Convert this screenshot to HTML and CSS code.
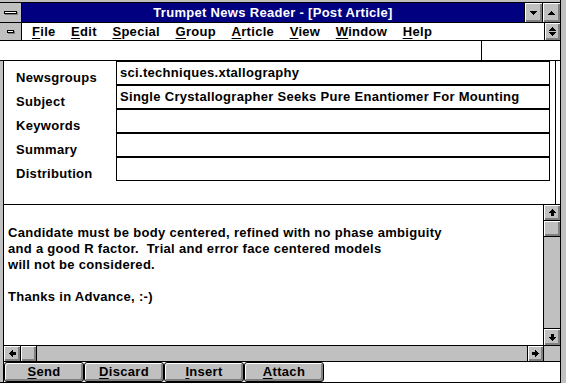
FILE: index.html
```html
<!DOCTYPE html>
<html>
<head>
<meta charset="utf-8">
<title>Trumpet News Reader - [Post Article]</title>
<link rel="stylesheet" href="styles.css">
</head>
<body>
<div class="window">
  <div class="main">
    <div class="titlebar">
      <div class="sysbox"><span class="sysdash"></span></div>
      <div class="title">Trumpet News Reader - [Post Article]</div>
      <div class="tbtn">
        <svg width="7" height="4" viewBox="0 0 7 4" shape-rendering="crispEdges"><rect x="0" y="0" width="7" height="1"/><rect x="1" y="1" width="5" height="1"/><rect x="2" y="2" width="3" height="1"/><rect x="3" y="3" width="1" height="1"/></svg>
      </div>
      <div class="tbtn">
        <svg width="7" height="4" viewBox="0 0 7 4" shape-rendering="crispEdges"><rect x="3" y="0" width="1" height="1"/><rect x="2" y="1" width="3" height="1"/><rect x="1" y="2" width="5" height="1"/><rect x="0" y="3" width="7" height="1"/></svg>
      </div>
    </div>
    <div class="menubar">
      <div class="docsys"><span class="docdash"></span></div>
      <nav class="menu">
        <span class="mi"><u>F</u>ile</span>
        <span class="mi"><u>E</u>dit</span>
        <span class="mi"><u>S</u>pecial</span>
        <span class="mi"><u>G</u>roup</span>
        <span class="mi"><u>A</u>rticle</span>
        <span class="mi"><u>V</u>iew</span>
        <span class="mi"><u>W</u>indow</span>
        <span class="mi"><u>H</u>elp</span>
      </nav>
      <div class="restore">
        <svg width="7" height="9" viewBox="0 0 7 9" shape-rendering="crispEdges"><rect x="3" y="0" width="1" height="1"/><rect x="2" y="1" width="3" height="1"/><rect x="1" y="2" width="5" height="1"/><rect x="0" y="3" width="7" height="1"/><rect x="0" y="5" width="7" height="1"/><rect x="1" y="6" width="5" height="1"/><rect x="2" y="7" width="3" height="1"/><rect x="3" y="8" width="1" height="1"/></svg>
      </div>
    </div>
    <div class="toolbar">
      <div class="tool-left"></div>
      <div class="tool-right"></div>
    </div>
    <div class="child">
      <div class="child-frame"></div>
      <div class="child-body">
        <div class="form">
          <div class="labels">
            <div>Newsgroups</div>
            <div>Subject</div>
            <div>Keywords</div>
            <div>Summary</div>
            <div>Distribution</div>
          </div>
          <div class="fields">
            <div class="field">sci.techniques.xtallography</div>
            <div class="field">Single Crystallographer Seeks Pure Enantiomer For Mounting</div>
            <div class="field"></div>
            <div class="field"></div>
            <div class="field"></div>
          </div>
          <div class="vline"></div>
        </div>
        <div class="editor">
          <div class="edit-text">
            <div class="ln"></div>
            <div class="ln">Candidate must be body centered, refined with no phase ambiguity</div>
            <div class="ln">and a good R factor.  Trial and error face centered models</div>
            <div class="ln">will not be considered.</div>
            <div class="ln"></div>
            <div class="ln">Thanks in Advance, :-)</div>
          </div>
          <div class="vscroll">
            <div class="sbtn up">
              <svg width="7" height="7" viewBox="0 0 7 7" shape-rendering="crispEdges"><rect x="3" y="0" width="1" height="1"/><rect x="2" y="1" width="3" height="1"/><rect x="1" y="2" width="5" height="1"/><rect x="0" y="3" width="7" height="1"/><rect x="2" y="4" width="3" height="3"/></svg>
            </div>
            <div class="sthumb vthumb"></div>
            <div class="strack"></div>
            <div class="sbtn down">
              <svg width="7" height="7" viewBox="0 0 7 7" shape-rendering="crispEdges"><rect x="2" y="0" width="3" height="3"/><rect x="0" y="3" width="7" height="1"/><rect x="1" y="4" width="5" height="1"/><rect x="2" y="5" width="3" height="1"/><rect x="3" y="6" width="1" height="1"/></svg>
            </div>
          </div>
        </div>
        <div class="hscroll">
          <div class="sbtn left">
            <svg width="7" height="7" viewBox="0 0 7 7" shape-rendering="crispEdges"><rect x="0" y="3" width="1" height="1"/><rect x="1" y="2" width="1" height="3"/><rect x="2" y="1" width="1" height="5"/><rect x="3" y="0" width="1" height="7"/><rect x="4" y="2" width="3" height="3"/></svg>
          </div>
          <div class="sthumb hthumb"></div>
          <div class="htrack"></div>
          <div class="sbtn right">
            <svg width="7" height="7" viewBox="0 0 7 7" shape-rendering="crispEdges"><rect x="6" y="3" width="1" height="1"/><rect x="5" y="2" width="1" height="3"/><rect x="4" y="1" width="1" height="5"/><rect x="3" y="0" width="1" height="7"/><rect x="0" y="2" width="3" height="3"/></svg>
          </div>
          <div class="corner"></div>
        </div>
        <div class="cmdbar">
          <div class="cbtn"><u>S</u>end</div>
          <div class="cbtn"><u>D</u>iscard</div>
          <div class="cbtn"><u>I</u>nsert</div>
          <div class="cbtn"><u>A</u>ttach</div>
        </div>
      </div>
    </div>
  </div>
  <div class="rframe"></div>
</div>
</body>
</html>
```

FILE: styles.css
```css
* { box-sizing: border-box; }

body {
  margin: 0;
  background: #fff;
  font-family: "Liberation Sans", Arial, sans-serif;
  font-weight: bold;
  font-size: 13px;
  letter-spacing: 0.3px;
  color: #000;
}

u { text-decoration: underline; text-underline-offset: 2px; text-decoration-thickness: 1px; }

.window {
  display: flex;
  width: 566px;
  height: 383px;
}

.main {
  width: 560px;
  display: flex;
  flex-direction: column;
  background: #c0c0c0;
}

.rframe {
  width: 6px;
  border-left: 1px solid #000;
  background: #c0c0c0;
}

/* title bar */
.titlebar {
  display: flex;
  height: 23px;
  padding-top: 2px;
  border-bottom: 1px solid #000;
}
.titlebar > * { border-top: 1px solid #000; }
.sysbox {
  width: 22px;
  border-right: 1px solid #000;
  background: #c0c0c0;
  display: flex;
  align-items: center;
  justify-content: center;
}
.sysdash {
  width: 13px;
  height: 3px;
  background: #fff;
  border: 1px solid #000;
  box-shadow: 1px 1px 0 #808080;
}
.title {
  flex: 1;
  background: #000080;
  color: #fff;
  text-align: center;
  line-height: 19px;
  white-space: nowrap;
}
.tbtn {
  width: 18px;
  border-left: 1px solid #000;
  background: #c0c0c0;
  box-shadow: inset 1px 1px 0 #fff, inset -2px -2px 0 #808080;
  display: flex;
  align-items: center;
  justify-content: center;
}

/* menu bar */
.menubar {
  display: flex;
  height: 18px;
  border-bottom: 1px solid #000;
  background: #fff;
}
.docsys {
  width: 22px;
  border-right: 1px solid #000;
  background: #c0c0c0;
  display: flex;
  align-items: center;
  justify-content: center;
}
.docdash {
  width: 7px;
  height: 3px;
  background: #fff;
  border: 1px solid #000;
  box-shadow: 1px 1px 0 #808080;
}
.menu {
  flex: 1;
  display: flex;
  gap: 15.5px;
  padding-left: 10px;
  line-height: 17px;
  white-space: nowrap;
}
.restore {
  width: 16px;
  border-left: 1px solid #000;
  background: #c0c0c0;
  box-shadow: inset 1px 1px 0 #fff, inset -2px -2px 0 #808080;
  display: flex;
  align-items: center;
  justify-content: center;
}

/* toolbar / status strip */
.toolbar {
  display: flex;
  height: 20px;
  border-bottom: 1px solid #000;
  background: #fff;
}
.tool-left { width: 482px; border-right: 1px solid #000; }
.tool-right { flex: 1; }

/* child window */
.child {
  flex: 1;
  display: flex;
}
.child-frame {
  width: 4px;
  background: #c0c0c0;
  border-right: 1px solid #000;
  border-bottom: 1px solid #000;
}
.child-body {
  width: 556px;
  display: flex;
  flex-direction: column;
  border-bottom: 1px solid #000;
  background: #fff;
}

/* header form */
.form {
  height: 144px;
  display: flex;
  border-bottom: 1px solid #000;
}
.labels {
  width: 112px;
  padding: 5px 0 0 12px;
  line-height: 24px;
}
.fields {
  width: 434px;
  margin-right: 5px;
  display: flex;
  flex-direction: column;
  align-self: flex-start;
}
.field {
  height: 24px;
  border: 1px solid #000;
  padding: 3px 3px 0;
  line-height: 16px;
  white-space: nowrap;
  overflow: hidden;
}
.vline { width: 1px; background: #000; }

/* body editor */
.editor {
  height: 140px;
  display: flex;
}
.edit-text {
  flex: 1;
  padding: 4px 0 0 4px;
  line-height: 16px;
  overflow: hidden;
}
.ln { height: 16px; white-space: pre; }

.vscroll {
  width: 17px;
  border-left: 1px solid #000;
  display: flex;
  flex-direction: column;
  background: #c0c0c0;
}
.sbtn {
  background: #c0c0c0;
  box-shadow: inset 1px 1px 0 #fff, inset -2px -2px 0 #808080;
  display: flex;
  align-items: center;
  justify-content: center;
}
.sthumb {
  background: #c0c0c0;
  box-shadow: inset 1px 1px 0 #fff, inset -2px -2px 0 #808080;
}
.vscroll .up { height: 16px; border-bottom: 1px solid #000; }
.vthumb { height: 16px; border-bottom: 1px solid #000; }
.strack { flex: 1; }
.vscroll .down { height: 17px; border-top: 1px solid #000; }

.hscroll {
  height: 17px;
  border-top: 1px solid #000;
  border-bottom: 1px solid #000;
  display: flex;
  background: #c0c0c0;
}
.hscroll .left { width: 17px; border-right: 1px solid #000; }
.hthumb { width: 16px; border-right: 1px solid #000; }
.htrack { flex: 1; }
.hscroll .right { width: 17px; border-left: 1px solid #000; border-right: 1px solid #000; }
.corner { width: 16px; background: #c0c0c0; }

/* command buttons */
.cmdbar {
  height: 20px;
  display: flex;
  background: #fff;
}
.cbtn {
  width: 80px;
  height: 20px;
  border: 1px solid #000;
  border-radius: 3px;
  background: #c0c0c0;
  box-shadow: inset 1px 1px 0 #fff, inset -2px -2px 0 #808080;
  text-align: center;
  line-height: 18px;
  white-space: nowrap;
}
```
